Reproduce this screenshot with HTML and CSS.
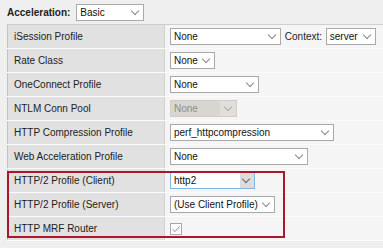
FILE: index.html
```html
<!DOCTYPE html>
<html lang="en">
<head>
  <meta charset="UTF-8" />
  <title>Acceleration</title>
  <link rel="stylesheet" href="styles.css">
</head>
<body>
  <div class="page">
    <div class="accel-line">
      <b>Acceleration:</b>
      <span class="sel w-basic">Basic</span>
    </div>

    <div class="frame">
      <table class="list">
        <tr>
          <td class="lbl">iSession Profile</td>
          <td class="val">
            <span class="sel w-isession">None</span>
            <span class="ctx">Context:</span>
            <span class="sel w-server">server</span>
          </td>
        </tr>
        <tr>
          <td class="lbl">Rate Class</td>
          <td class="val"><span class="sel w-rate">None</span></td>
        </tr>
        <tr>
          <td class="lbl">OneConnect Profile</td>
          <td class="val"><span class="sel w-oneconnect">None</span></td>
        </tr>
        <tr>
          <td class="lbl">NTLM Conn Pool</td>
          <td class="val"><span class="sel disabled w-ntlm">None</span></td>
        </tr>
        <tr>
          <td class="lbl">HTTP Compression Profile</td>
          <td class="val"><span class="sel w-compress">perf_httpcompression</span></td>
        </tr>
        <tr>
          <td class="lbl">Web Acceleration Profile</td>
          <td class="val"><span class="sel w-webaccel">None</span></td>
        </tr>
        <tr>
          <td class="lbl">HTTP/2 Profile (Client)</td>
          <td class="val"><span class="sel hover w-h2client">http2</span></td>
        </tr>
        <tr>
          <td class="lbl">HTTP/2 Profile (Server)</td>
          <td class="val"><span class="sel w-h2server">(Use Client Profile)</span></td>
        </tr>
        <tr>
          <td class="lbl">HTTP MRF Router</td>
          <td class="val">
            <span class="check">
              <svg width="10" height="10" viewBox="0 0 10 10"><path d="M1.5 5.2 L4 7.6 L8.8 2.2" fill="none" stroke="#8a8a8a" stroke-width="1"/></svg>
            </span>
          </td>
        </tr>
      </table>

      <!-- highlight around the HTTP/2 rows -->
      <div class="highlight"></div>
    </div>
  </div>
</body>
</html>
```

FILE: styles.css
```css
body {
  margin: 0;
  background: #efefef;
  font-family: "Liberation Sans", Arial, sans-serif;
  font-size: 10px;
  color: #222;
}
.page {
  padding: 4px 0 0 7px;
}
.accel-line {
  display: flex;
  align-items: center;
  gap: 6px;
  height: 16px;
  margin-bottom: 4px;
}
.accel-line b {
  font-size: 10px;
}
.frame {
  position: relative;
}
.list {
  border-collapse: collapse;
  width: 376px;
  border-top: 1px solid #cfcfcf;
  border-left: 1px solid #c4c4c4;
}
.list td {
  height: 23px;
  padding: 0;
  border-bottom: 1px solid #fbfbfb;
}
.lbl {
  width: 150px;
  padding-left: 6px !important;
  background: #e1e1e1;
  border-right: 1px solid #d2d2d2;
}
.val {
  background: #f5f5f5;
  padding-left: 5px !important;
  white-space: nowrap;
}
.val, .val .sel {
  vertical-align: middle;
}

/* fake select boxes */
.sel {
  display: inline-block;
  position: relative;
  box-sizing: border-box;
  height: 17px;
  line-height: 15px;
  padding-left: 3px;
  background: #fff;
  border: 1px solid #a9a9a9;
  color: #111;
  font-size: 10px;
  vertical-align: middle;
}
.sel::after {
  content: "";
  position: absolute;
  right: 5px;
  top: 3px;
  width: 5px;
  height: 5px;
  border-right: 1px solid #888;
  border-bottom: 1px solid #888;
  transform: rotate(45deg);
}
.sel.disabled {
  background: #d9d6d1;
  border-color: #d0ccc6;
  color: #8d8d8d;
}
.sel.disabled::before {
  content: "";
  position: absolute;
  right: 0;
  top: 0;
  width: 16px;
  height: 15px;
  background: #e2dfdb;
}
.sel.disabled::after {
  border-color: #aaa;
}
.sel.hover {
  border-color: #82b6e6;
}
.sel.hover::before {
  content: "";
  position: absolute;
  right: 0;
  top: 0;
  width: 14px;
  height: 15px;
  background: #dcdcdc;
}
.sel.hover::after {
  border-color: #666;
}
.ctx {
  margin: 0 1px 0 1px;
  vertical-align: middle;
}

.w-basic { width: 68px; }
.w-isession { width: 111px; }
.w-server { width: 50px; }
.w-rate { width: 45px; }
.w-oneconnect { width: 89px; }
.w-ntlm { width: 67px; }
.w-compress { width: 164px; }
.w-webaccel { width: 138px; }
.w-h2client { width: 85px; }
.w-h2server { width: 105px; }

.check {
  display: inline-flex;
  align-items: center;
  justify-content: center;
  box-sizing: border-box;
  width: 12px;
  height: 12px;
  background: #fff;
  border: 1px solid #a9a9a9;
  vertical-align: middle;
}

.highlight {
  position: absolute;
  left: 0;
  top: 147px;
  width: 278px;
  height: 67px;
  box-sizing: border-box;
  border: 2px solid #a8182a;
  pointer-events: none;
}
```
